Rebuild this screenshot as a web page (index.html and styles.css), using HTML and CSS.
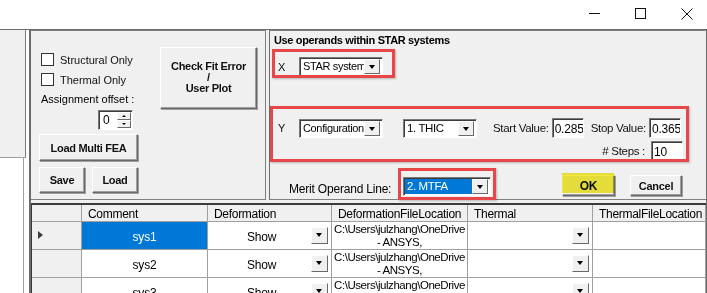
FILE: index.html
```html
<!DOCTYPE html>
<html lang="en">
<head>
  <meta charset="UTF-8" />
  <title>STAR systems</title>
  <link rel="stylesheet" href="styles.css">
</head>
<body>

  <div class="titlebar">
    <svg class="winbtn" width="12" height="12" viewBox="0 0 12 12"><path d="M0 5.5h11" stroke="#111" stroke-width="1"/></svg>
    <svg class="winbtn" width="12" height="12" viewBox="0 0 12 12"><rect x="0.5" y="0.5" width="10" height="10" fill="none" stroke="#111"/></svg>
    <svg class="winbtn" width="12" height="12" viewBox="0 0 12 12"><path d="M0.5 0.5l11 11M11.5 0.5l-11 11" stroke="#111" stroke-width="1"/></svg>
  </div>

  <div class="workspace">
    <div class="sidebar">
      <div class="sidebarTop"></div>
      <div class="sidebarList"></div>
    </div>

    <div class="main">
      <div class="toprow">

        <div class="group leftGroup">
          <div class="leftCol">
            <label class="check"><span class="box"></span>Structural Only</label>
            <label class="check"><span class="box"></span>Thermal Only</label>
            <div class="offsetLabel">Assignment offset :</div>
            <div class="spinner">
              <span class="spinVal">0</span>
              <span class="spinBtns">
                <span class="spinUp"></span>
                <span class="spinDown"></span>
              </span>
            </div>
            <button class="btn btnWide">Load Multi FEA</button>
            <div class="btnRow">
              <button class="btn btnSmall">Save</button>
              <button class="btn btnSmall">Load</button>
            </div>
          </div>
          <button class="btn btnCheck">Check Fit Error<br>/<br>User Plot</button>
        </div>

        <div class="group rightGroup">
          <div class="groupTitle">Use operands within STAR systems</div>

          <div class="row rowX">
            <span class="axis">X</span>
            <div class="combo comboMain"><span class="comboText">STAR system</span><span class="drop"></span></div>
          </div>

          <div class="row rowY">
            <span class="axis">Y</span>
            <div class="combo comboMain"><span class="comboText">Configuration</span><span class="drop"></span></div>
            <div class="combo comboThic"><span class="comboText">1. THIC</span><span class="drop"></span></div>
            <span class="fieldLabel startLabel">Start Value:</span>
            <div class="field">0.285</div>
            <span class="fieldLabel stopLabel">Stop Value:</span>
            <div class="field">0.365</div>
          </div>

          <div class="row rowSteps">
            <span class="fieldLabel">#&nbsp;Steps :</span>
            <div class="field">10</div>
          </div>

          <div class="row rowMerit">
            <span class="meritLabel">Merit Operand Line:</span>
            <div class="combo comboMerit"><span class="comboText selected">2. MTFA</span><span class="drop"></span></div>
            <button class="btn btnOk">OK</button>
            <button class="btn btnCancel">Cancel</button>
          </div>

          <div class="mark markX"></div>
          <div class="mark markY"></div>
          <div class="mark markMerit"></div>
          <div class="highlight"></div>
        </div>

      </div>

      <div class="grid">
        <div class="hcell"></div>
        <div class="hcell">Comment</div>
        <div class="hcell">Deformation</div>
        <div class="hcell">DeformationFileLocation</div>
        <div class="hcell">Thermal</div>
        <div class="hcell">ThermalFileLocation</div>

        <div class="rowhead"><span class="arrow"></span></div>
        <div class="cell center active">sys1</div>
        <div class="cell center show">Show<span class="drop cellDrop"></span></div>
        <div class="cell path"><span>C:\Users\julzhang\OneDrive</span><span>- ANSYS,</span></div>
        <div class="cell show"><span class="drop cellDrop"></span></div>
        <div class="cell"></div>

        <div class="rowhead"></div>
        <div class="cell center">sys2</div>
        <div class="cell center show">Show<span class="drop cellDrop"></span></div>
        <div class="cell path"><span>C:\Users\julzhang\OneDrive</span><span>- ANSYS,</span></div>
        <div class="cell show"><span class="drop cellDrop"></span></div>
        <div class="cell"></div>

        <div class="rowhead"></div>
        <div class="cell center">sys3</div>
        <div class="cell center show">Show<span class="drop cellDrop"></span></div>
        <div class="cell path"><span>C:\Users\julzhang\OneDrive</span><span>- ANSYS,</span></div>
        <div class="cell show"><span class="drop cellDrop"></span></div>
        <div class="cell"></div>
      </div>
    </div>
  </div>

</body>
</html>
```

FILE: styles.css
```css
* {
  box-sizing: border-box;
}
body {
  margin: 0;
  width: 707px;
  height: 293px;
  overflow: hidden;
  background: #fff;
  font-family: 'Liberation Sans', Arial, sans-serif;
  font-size: 11px;
  color: #000;
}
.titlebar {
  height: 29px;
  display: flex;
  justify-content: flex-end;
  align-items: flex-start;
  gap: 34px;
  padding: 8px 14px 0 0;
  background: #fff;
}
.winbtn {
  display: block;
}
.workspace {
  display: flex;
  height: 264px;
  border-top: 1px solid #6d6d6d;
}
.sidebar {
  width: 26px;
  display: flex;
  flex-direction: column;
}
.sidebarTop {
  height: 128px;
  background: #f0f0f0;
  border-right: 1px solid #7a7a7a;
  border-bottom: 1px solid #a0a0a0;
}
.sidebarList {
  flex: 1;
  width: 24px;
  background: #fff;
  border-right: 1px solid #a0a0a0;
}
.main {
  margin-left: 3px;
  flex: 1;
  background: #f0f0f0;
  border-left: 2px solid #6b6b6b;
  border-right: 1px solid #6b6b6b;
  display: flex;
  flex-direction: column;
}
.toprow {
  display: flex;
  gap: 3px;
  height: 170px;
}
.group {
  border: 1px solid #808080;
  border-left-color: #6b6b6b;
  position: relative;
}
.leftGroup {
  width: 235px;
  border-left: none;
  display: flex;
  padding: 16px 0 0 8px;
}
.leftCol {
  width: 100px;
}
.check {
  display: flex;
  align-items: center;
  height: 13px;
  margin: 6px 0 7px 2px;
  color: #111;
}
.box {
  width: 13px;
  height: 13px;
  background: #fff;
  border: 1px solid #333;
  margin-right: 6px;
}
.offsetLabel {
  margin: 4px 0 0 2px;
  height: 15px;
}
.spinner {
  display: flex;
  width: 35px;
  height: 20px;
  margin: 2px 0 0 59px;
  background: #fff;
  border: 1px solid;
  border-color: #7a7a7a #fff #fff #7a7a7a;
  box-shadow: inset 1px 1px 0 #3c3c3c;
}
.spinVal {
  flex: 1;
  padding: 2px 0 0 4px;
  font-size: 12px;
}
.spinBtns {
  width: 15px;
  display: flex;
  flex-direction: column;
  padding: 1px 1px 1px 0;
}
.spinUp, .spinDown {
  flex: 1;
  background: #f0f0f0;
  border: 1px solid;
  border-color: #fff #696969 #696969 #fff;
  position: relative;
}
.spinUp::after, .spinDown::after {
  content: '';
  position: absolute;
  left: 4px;
  top: 2px;
  border-left: 2px solid transparent;
  border-right: 2px solid transparent;
}
.spinUp::after {
  border-bottom: 2px solid #000;
}
.spinDown::after {
  border-top: 2px solid #000;
}
.btn {
  font-family: 'Liberation Sans', Arial, sans-serif;
  font-size: 11px;
  font-weight: 700;
  letter-spacing: -0.3px;
  color: #111;
  background: #f0f0f0;
  border: 1px solid;
  border-color: #fff #696969 #696969 #fff;
  box-shadow: inset -1px -1px 0 #a0a0a0, 1px 1px 0 #a0a0a0;
  padding: 0;
  margin: 0;
}
.btnWide {
  display: block;
  width: 99px;
  height: 27px;
  margin: 4px 0 0 0;
}
.btnRow {
  display: flex;
  gap: 7px;
  margin-top: 6px;
}
.btnSmall {
  width: 46px;
  height: 26px;
}
.btnCheck {
  width: 97px;
  height: 62px;
  margin: 0 0 0 21px;
  line-height: 11px;
  padding-bottom: 2px;
}
.rightGroup {
  flex: 1;
  padding: 3px 0 0 4px;
  border-right: none;
}
.groupTitle {
  font-weight: 700;
  letter-spacing: -0.35px;
  height: 14px;
}
.row {
  display: flex;
  align-items: center;
}
.axis {
  width: 25px;
  padding-left: 4px;
  color: #111;
}
.rowX {
  margin-top: 9px;
  height: 19px;
}
.rowY {
  margin-top: 42px;
  height: 20px;
}
.combo {
  display: flex;
  height: 19px;
  background: #fff;
  border: 1px solid;
  border-color: #7a7a7a #fff #fff #7a7a7a;
  box-shadow: inset 1px 1px 0 #3c3c3c;
  padding: 2px 2px 2px 3px;
  overflow: hidden;
}
.comboText {
  flex: 1;
  overflow: hidden;
  white-space: nowrap;
  font-size: 11.5px;
  line-height: 13px;
  letter-spacing: -0.4px;
}
.comboMain .comboText {
  font-size: 11px;
  letter-spacing: -0.35px;
}
.comboText.selected {
  background: #0078d7;
  color: #fff;
  margin: -1px 0 -1px -2px;
  padding: 1px 0 0 2px;
}
.drop {
  width: 16px;
  height: 15px;
  margin-top: -1px;
  flex: none;
  background: #f0f0f0;
  border: 1px solid;
  border-color: #fff #696969 #696969 #fff;
  position: relative;
}
.drop::after {
  content: '';
  position: absolute;
  left: 4px;
  top: 5px;
  border-left: 3.5px solid transparent;
  border-right: 3.5px solid transparent;
  border-top: 4px solid #000;
}
.comboMain {
  width: 84px;
}
.comboThic {
  width: 74px;
  margin-left: 20px;
}
.field {
  width: 32px;
  height: 20px;
  background: #fff;
  border: 1px solid;
  border-color: #7a7a7a #fff #fff #7a7a7a;
  box-shadow: inset 1px 1px 0 #3c3c3c;
  padding: 3px 0 0 2px;
  font-size: 12px;
  line-height: 15px;
  letter-spacing: -0.2px;
  overflow: hidden;
}
.fieldLabel {
  font-size: 11.5px;
  letter-spacing: -0.3px;
  color: #111;
  padding-right: 3px;
}
.startLabel {
  margin-left: 16px;
}
.stopLabel {
  margin-left: 7px;
}
.rowSteps {
  justify-content: flex-end;
  margin-top: 3px;
  padding-right: 23px;
  height: 20px;
}
.rowSteps .fieldLabel {
  padding-right: 6px;
}
.rowMerit {
  margin-top: 14px;
  height: 21px;
}
.meritLabel {
  font-size: 12px;
  letter-spacing: -0.2px;
  margin-left: 15px;
  padding-top: 6px;
  width: 114px;
}
.comboMerit {
  width: 88px;
  margin-top: 1px;
}
.btnOk {
  width: 53px;
  height: 21px;
  margin-left: 71px;
  font-size: 12px;
}
.btnCancel {
  width: 52px;
  height: 21px;
  margin-left: 15px;
}
.mark {
  position: absolute;
  border: 3px solid #e8474a;
  box-shadow: 1px 1px 2px rgba(0, 0, 0, 0.25);
}
.markX {
  left: 2px;
  top: 18px;
  width: 123px;
  height: 29px;
}
.markY {
  left: 0;
  top: 75px;
  width: 419px;
  height: 56px;
}
.markMerit {
  left: 128px;
  top: 137px;
  width: 98px;
  height: 32px;
}
.highlight {
  position: absolute;
  left: 292px;
  top: 142px;
  width: 52px;
  height: 20px;
  background: #f2ea3e;
  mix-blend-mode: multiply;
}
.grid {
  margin-top: 3px;
  flex: 1;
  display: grid;
  grid-template-columns: 50px 126px 124px 136px 125px 1fr;
  grid-template-rows: 17px 28px 28px 28px;
  background: #fff;
  border-top: 2px solid #3a3a3a;
  border-left: 1px solid #3a3a3a;
  overflow: hidden;
}
.hcell {
  background: #f0f0f0;
  border-right: 1px solid #a0a0a0;
  border-bottom: 1px solid #a0a0a0;
  padding: 2px 0 0 6px;
  font-size: 12px;
  letter-spacing: -0.3px;
  white-space: nowrap;
  overflow: hidden;
}
.rowhead {
  background: #f0f0f0;
  border-right: 1px solid #a0a0a0;
  border-bottom: 1px solid #a0a0a0;
  position: relative;
}
.arrow {
  position: absolute;
  left: 6px;
  top: 9px;
  border-top: 4px solid transparent;
  border-bottom: 4px solid transparent;
  border-left: 5px solid #3c3c3c;
}
.cell {
  border-right: 1px solid #a0a0a0;
  border-bottom: 1px solid #a0a0a0;
  font-size: 12px;
  letter-spacing: -0.2px;
  position: relative;
  overflow: hidden;
  white-space: nowrap;
}
.center {
  text-align: center;
  padding-top: 8px;
}
.active {
  background: #0078d7;
  color: #fff;
}
.show {
  padding-right: 16px;
}
.cellDrop {
  position: absolute;
  right: 3px;
  top: 6px;
  width: 17px;
  height: 17px;
}
.path {
  display: flex;
  flex-direction: column;
  align-items: center;
  font-size: 11.5px;
  letter-spacing: -0.45px;
  line-height: 13px;
  padding-top: 1px;
}
```
